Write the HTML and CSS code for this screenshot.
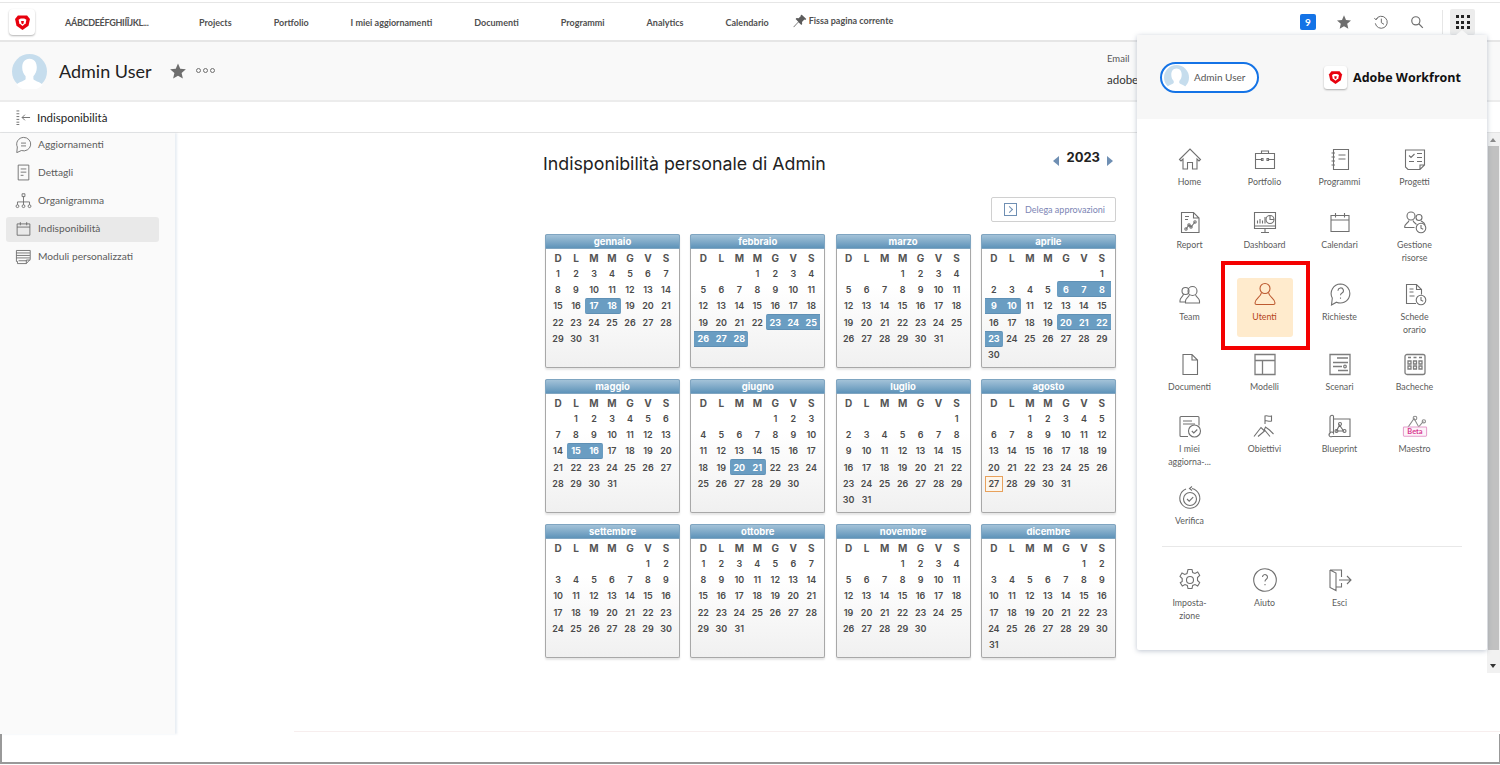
FILE: index.html
```html
<!DOCTYPE html>
<html lang="en">

<head>
  <meta charset="UTF-8" />
  <title>Indisponibilità - Admin User</title>
  <link rel="stylesheet" href="styles.css">
</head>

<body>

  <svg class="defs" width="0" height="0">
    <symbol id="shield" viewBox="0 0 24 24">
      <path fill="#e8000d" d="M5.500 2h13l4 5-2 9.500-8.500 6-8.500-6-2-9.500z" />
      <path fill="#fff" d="M6.500 8l3-1.500h5l3 1.500-1 5-4.500 4-4.500-4z" />
      <path fill="#e8000d" d="M10 10h4l-.5 3.500-1.500 1-1.500-1z" />
    </symbol>
    <symbol id="avatar" viewBox="0 0 36 36">
      <circle cx="18" cy="18" r="18" fill="#c6dded" />
      <path fill="#fff" d="M18 5c5 0 7.500 4 7.500 9 0 4-1.500 7-3.500 9v3c2 2 7 3 9.500 5.500a18 18 0 0 1-27 0C7 29 12 28 14 26v-3c-2-2-3.500-5-3.500-9 0-5 2.500-9 7.500-9z" />
    </symbol>
    <symbol id="star" viewBox="0 0 24 24">
      <path fill="#6e6e6e" d="M12 2l3 7 7.500.7-5.700 5 1.700 7.300L12 18.200 5.500 22l1.700-7.300-5.700-5L9 9z" />
    </symbol>
    <symbol id="cal" viewBox="0 0 24 24">
      <path d="M3 5.500h18v16H3zM3 10h18M7.500 3v4.500M16.500 3v4.500" />
    </symbol>
  </svg>

  <header class="topbar">
    <div class="logo-box"><svg class="logo-mark"><use href="#shield" /></svg></div>
    <nav class="topnav">
      <a class="first">AÁBCDEÉFGHIÍÎJKL...</a>
      <a>Projects</a>
      <a>Portfolio</a>
      <a>I miei aggiornamenti</a>
      <a>Documenti</a>
      <a>Programmi</a>
      <a>Analytics</a>
      <a>Calendario</a>
    </nav>
    <div class="pin">
      <svg class="ico-pin" viewBox="0 0 16 16">
        <path fill="#5c5c5c" d="M10 .8l5.200 5-1.200 1-1-.4-2.700 2.700.2 2.400-1 1L6.300 9.300 1 15l-.5-.5L6 8.800 3 5.700l1-1 2.400.2L9 2.200l-.3-1z" />
      </svg>
      Fissa pagina corrente
    </div>
    <div class="top-tools">
      <span class="badge">9</span>
      <svg class="tool"><use href="#star" /></svg>
      <svg class="tool line" viewBox="0 0 24 24">
        <path d="M4.500 8A9 9 0 1 1 3.500 14M2 6.500l2.500 2 2.500-2M12.500 7v6l4 2.500" />
      </svg>
      <svg class="tool line search" viewBox="0 0 24 24">
        <circle cx="10" cy="10" r="7" />
        <path d="M15 15l7 7" />
      </svg>
      <span class="tool-sep"></span>
      <div class="apps">
        <b></b><b></b><b></b><b></b><b></b><b></b><b></b><b></b><b></b>
      </div>
    </div>
  </header>

  <section class="userhead">
    <svg class="avatar-big"><use href="#avatar" /></svg>
    <h1>Admin User</h1>
    <svg class="head-star"><use href="#star" /></svg>
    <div class="dots"><i></i><i></i><i></i></div>
    <div class="email">
      <span class="email-label">Email</span>
      <span class="email-value">adobel</span>
    </div>
  </section>

  <div class="subhead">
    <svg class="collapse" viewBox="0 0 16 16">
      <path d="M.5 1h3M.5 4h3M.5 7h3M.5 10h3M.5 13h3M.5 15.500h3" />
      <path d="M15 8H6.500M9.500 5l-3 3 3 3" />
    </svg>
    Indisponibilità
  </div>

  <div class="content">
    <aside class="sidebar">
      <a class="side-item">
        <svg class="side-ico" viewBox="0 0 24 24">
          <path d="M12 2a10 9.500 0 1 1-3 18.500l-6.500 3 .8-8A10 9.500 0 0 1 12 2zM8.500 10h7M8.500 14h7" />
        </svg>
        Aggiornamenti
      </a>
      <a class="side-item">
        <svg class="side-ico" viewBox="0 0 24 24">
          <path d="M4.500 1.500h15v21h-15zM8 7h8M8 11.500h8M8 16h4" />
        </svg>
        Dettagli
      </a>
      <a class="side-item">
        <svg class="side-ico" viewBox="0 0 24 24">
          <path d="M10 2.500h4v4h-4zM12 6.500V14M3.500 18v-4h17v4M12 14v4" />
          <circle cx="3.500" cy="20" r="2" /><circle cx="12" cy="20" r="2" /><circle cx="20.500" cy="20" r="2" />
        </svg>
        Organigramma
      </a>
      <a class="side-item active">
        <svg class="side-ico"><use href="#cal" /></svg>
        Indisponibilità
      </a>
      <a class="side-item">
        <svg class="side-ico" viewBox="0 0 24 24">
          <path d="M2 3.500h19.500V16l-5.500 6H3.500v-3H2zM2 7h19M2 10.500h19M2 14h19M5 18h11M16 22v-5h5.500" />
        </svg>
        Moduli personalizzati
      </a>
    </aside>

    <main class="main">
      <div class="title-row">
        <h2>Indisponibilità personale di Admin</h2>
        <div class="year">
          <i class="arrow-left"></i>
          <span>2023</span>
          <i class="arrow-right"></i>
        </div>
      </div>

      <div class="delegate-row">
        <a class="delegate">
          <span class="delegate-ico"></span>
          Delega approvazioni
        </a>
      </div>

      <div class="months">
        <div class="month">
          <div class="month-name">gennaio</div>
          <div class="days">
            <b>D</b><b>L</b><b>M</b><b>M</b><b>G</b><b>V</b><b>S</b>
            <span>1</span><span>2</span><span>3</span><span>4</span><span>5</span><span>6</span><span>7</span><span>8</span><span>9</span><span>10</span><span>11</span><span>12</span><span>13</span><span>14</span><span>15</span><span>16</span><span class="off start">17</span><span class="off end">18</span><span>19</span><span>20</span><span>21</span><span>22</span><span>23</span><span>24</span><span>25</span><span>26</span><span>27</span><span>28</span><span>29</span><span>30</span><span>31</span>
          </div>
        </div>
        <div class="month">
          <div class="month-name">febbraio</div>
          <div class="days">
            <b>D</b><b>L</b><b>M</b><b>M</b><b>G</b><b>V</b><b>S</b>
            <span class="col4">1</span><span>2</span><span>3</span><span>4</span><span>5</span><span>6</span><span>7</span><span>8</span><span>9</span><span>10</span><span>11</span><span>12</span><span>13</span><span>14</span><span>15</span><span>16</span><span>17</span><span>18</span><span>19</span><span>20</span><span>21</span><span>22</span><span class="off start">23</span><span class="off">24</span><span class="off">25</span><span class="off">26</span><span class="off">27</span><span class="off end">28</span>
          </div>
        </div>
        <div class="month">
          <div class="month-name">marzo</div>
          <div class="days">
            <b>D</b><b>L</b><b>M</b><b>M</b><b>G</b><b>V</b><b>S</b>
            <span class="col4">1</span><span>2</span><span>3</span><span>4</span><span>5</span><span>6</span><span>7</span><span>8</span><span>9</span><span>10</span><span>11</span><span>12</span><span>13</span><span>14</span><span>15</span><span>16</span><span>17</span><span>18</span><span>19</span><span>20</span><span>21</span><span>22</span><span>23</span><span>24</span><span>25</span><span>26</span><span>27</span><span>28</span><span>29</span><span>30</span><span>31</span>
          </div>
        </div>
        <div class="month">
          <div class="month-name">aprile</div>
          <div class="days">
            <b>D</b><b>L</b><b>M</b><b>M</b><b>G</b><b>V</b><b>S</b>
            <span class="col7">1</span><span>2</span><span>3</span><span>4</span><span>5</span><span class="off start">6</span><span class="off">7</span><span class="off">8</span><span class="off">9</span><span class="off end">10</span><span>11</span><span>12</span><span>13</span><span>14</span><span>15</span><span>16</span><span>17</span><span>18</span><span>19</span><span class="off start">20</span><span class="off">21</span><span class="off">22</span><span class="off end">23</span><span>24</span><span>25</span><span>26</span><span>27</span><span>28</span><span>29</span><span>30</span>
          </div>
        </div>
        <div class="month">
          <div class="month-name">maggio</div>
          <div class="days">
            <b>D</b><b>L</b><b>M</b><b>M</b><b>G</b><b>V</b><b>S</b>
            <span class="col2">1</span><span>2</span><span>3</span><span>4</span><span>5</span><span>6</span><span>7</span><span>8</span><span>9</span><span>10</span><span>11</span><span>12</span><span>13</span><span>14</span><span class="off start">15</span><span class="off end">16</span><span>17</span><span>18</span><span>19</span><span>20</span><span>21</span><span>22</span><span>23</span><span>24</span><span>25</span><span>26</span><span>27</span><span>28</span><span>29</span><span>30</span><span>31</span>
          </div>
        </div>
        <div class="month">
          <div class="month-name">giugno</div>
          <div class="days">
            <b>D</b><b>L</b><b>M</b><b>M</b><b>G</b><b>V</b><b>S</b>
            <span class="col5">1</span><span>2</span><span>3</span><span>4</span><span>5</span><span>6</span><span>7</span><span>8</span><span>9</span><span>10</span><span>11</span><span>12</span><span>13</span><span>14</span><span>15</span><span>16</span><span>17</span><span>18</span><span>19</span><span class="off start">20</span><span class="off end">21</span><span>22</span><span>23</span><span>24</span><span>25</span><span>26</span><span>27</span><span>28</span><span>29</span><span>30</span>
          </div>
        </div>
        <div class="month">
          <div class="month-name">luglio</div>
          <div class="days">
            <b>D</b><b>L</b><b>M</b><b>M</b><b>G</b><b>V</b><b>S</b>
            <span class="col7">1</span><span>2</span><span>3</span><span>4</span><span>5</span><span>6</span><span>7</span><span>8</span><span>9</span><span>10</span><span>11</span><span>12</span><span>13</span><span>14</span><span>15</span><span>16</span><span>17</span><span>18</span><span>19</span><span>20</span><span>21</span><span>22</span><span>23</span><span>24</span><span>25</span><span>26</span><span>27</span><span>28</span><span>29</span><span>30</span><span>31</span>
          </div>
        </div>
        <div class="month">
          <div class="month-name">agosto</div>
          <div class="days">
            <b>D</b><b>L</b><b>M</b><b>M</b><b>G</b><b>V</b><b>S</b>
            <span class="col3">1</span><span>2</span><span>3</span><span>4</span><span>5</span><span>6</span><span>7</span><span>8</span><span>9</span><span>10</span><span>11</span><span>12</span><span>13</span><span>14</span><span>15</span><span>16</span><span>17</span><span>18</span><span>19</span><span>20</span><span>21</span><span>22</span><span>23</span><span>24</span><span>25</span><span>26</span><span class="today">27</span><span>28</span><span>29</span><span>30</span><span>31</span>
          </div>
        </div>
        <div class="month">
          <div class="month-name">settembre</div>
          <div class="days">
            <b>D</b><b>L</b><b>M</b><b>M</b><b>G</b><b>V</b><b>S</b>
            <span class="col6">1</span><span>2</span><span>3</span><span>4</span><span>5</span><span>6</span><span>7</span><span>8</span><span>9</span><span>10</span><span>11</span><span>12</span><span>13</span><span>14</span><span>15</span><span>16</span><span>17</span><span>18</span><span>19</span><span>20</span><span>21</span><span>22</span><span>23</span><span>24</span><span>25</span><span>26</span><span>27</span><span>28</span><span>29</span><span>30</span>
          </div>
        </div>
        <div class="month">
          <div class="month-name">ottobre</div>
          <div class="days">
            <b>D</b><b>L</b><b>M</b><b>M</b><b>G</b><b>V</b><b>S</b>
            <span>1</span><span>2</span><span>3</span><span>4</span><span>5</span><span>6</span><span>7</span><span>8</span><span>9</span><span>10</span><span>11</span><span>12</span><span>13</span><span>14</span><span>15</span><span>16</span><span>17</span><span>18</span><span>19</span><span>20</span><span>21</span><span>22</span><span>23</span><span>24</span><span>25</span><span>26</span><span>27</span><span>28</span><span>29</span><span>30</span><span>31</span>
          </div>
        </div>
        <div class="month">
          <div class="month-name">novembre</div>
          <div class="days">
            <b>D</b><b>L</b><b>M</b><b>M</b><b>G</b><b>V</b><b>S</b>
            <span class="col4">1</span><span>2</span><span>3</span><span>4</span><span>5</span><span>6</span><span>7</span><span>8</span><span>9</span><span>10</span><span>11</span><span>12</span><span>13</span><span>14</span><span>15</span><span>16</span><span>17</span><span>18</span><span>19</span><span>20</span><span>21</span><span>22</span><span>23</span><span>24</span><span>25</span><span>26</span><span>27</span><span>28</span><span>29</span><span>30</span>
          </div>
        </div>
        <div class="month">
          <div class="month-name">dicembre</div>
          <div class="days">
            <b>D</b><b>L</b><b>M</b><b>M</b><b>G</b><b>V</b><b>S</b>
            <span class="col6">1</span><span>2</span><span>3</span><span>4</span><span>5</span><span>6</span><span>7</span><span>8</span><span>9</span><span>10</span><span>11</span><span>12</span><span>13</span><span>14</span><span>15</span><span>16</span><span>17</span><span>18</span><span>19</span><span>20</span><span>21</span><span>22</span><span>23</span><span>24</span><span>25</span><span>26</span><span>27</span><span>28</span><span>29</span><span>30</span><span>31</span>
          </div>
        </div>
      </div>
    </main>

    <div class="scrollbar">
      <i class="scroll-up"></i>
      <div class="thumb"></div>
      <i class="scroll-down"></i>
    </div>
  </div>

  <div class="bottom-box"></div>

  <!-- apps menu -->
  <div class="panel">
    <i class="panel-tip"></i>
    <div class="panel-head">
      <div class="pill">
        <svg class="pill-avatar"><use href="#avatar" /></svg>
        Admin User
      </div>
      <div class="brand">
        <div class="brand-box"><svg class="brand-mark"><use href="#shield" /></svg></div>
        Adobe Workfront
      </div>
    </div>

    <div class="apps-grid">
      <a class="app">
        <svg viewBox="0 0 24 24"><path d="M1.500 12.500L12 2l10.500 10.500-1.500 1.500-2-2v10h-4.500v-6.500h-5V22H5V12l-2 2z" /></svg>
        <span>Home</span>
      </a>
      <a class="app">
        <svg viewBox="0 0 24 24"><path d="M2.500 6.500h19v15h-19zM8.500 6.500V4h7v2.500M2.500 12.500h6M15.500 12.500h6M8.500 11.500h1.500v2H8.500zM14 11.500h1.500v2H14z" /></svg>
        <span>Portfolio</span>
      </a>
      <a class="app">
        <svg viewBox="0 0 24 24"><path d="M5.500 2.500h15v20h-15zM3.500 6h3.500M3.500 10h3.500M3.500 14h3.500M3.500 18h3.500M10.500 8h7M10.500 12h7" /></svg>
        <span>Programmi</span>
      </a>
      <a class="app">
        <svg viewBox="0 0 24 24"><path d="M2.500 3h19v15l-4.500 4.500H5L2.500 20zM17 22.500V18h4.500M6 8.500l2 2 3.500-3.500M14 6.500h5M14 10.500h5M14 14.500h5M6 14.500h5" /></svg>
        <span>Progetti</span>
      </a>

      <a class="app">
        <svg viewBox="0 0 24 24"><path d="M3.500 2.500h12l5.500 5.500v14.500H3.500zM15.500 2.500V8H21M7 6.500h4M7 9.500h3M8 19l3-4 2 2 4-5" /><circle cx="8" cy="19" r="1.200" /><circle cx="11" cy="15" r="1.200" /><circle cx="13" cy="17" r="1.200" /><circle cx="17" cy="12" r="1.200" /></svg>
        <span>Report</span>
      </a>
      <a class="app">
        <svg viewBox="0 0 24 24"><path d="M1.500 2.500h21v16h-21zM1.500 16h21M12 18.500v3.500M8 22.500h8M4.500 13.500v-3M7 13.500V9M9.500 13.500v-3M12 13.500V7" /><circle cx="17" cy="9.500" r="4" /><path d="M17 5.500v4h4" /></svg>
        <span>Dashboard</span>
      </a>
      <a class="app">
        <svg><use href="#cal" /></svg>
        <span>Calendari</span>
      </a>
      <a class="app">
        <svg viewBox="0 0 24 24"><circle cx="8" cy="6" r="4" /><circle cx="16" cy="7.500" r="3" /><path d="M1.500 17.500c0-4 3.500-4 4.500-7M10 10.500c1 2.500 3 3 3.500 4M1.500 17.500h10M18 11c1.500 1 3.500 1.500 4 4" /><circle cx="18" cy="18" r="4.800" /><path d="M18 15v3.200l2.200 1" /></svg>
        <span>Gestione risorse</span>
      </a>

      <a class="app">
        <svg viewBox="0 0 24 24"><circle cx="7.500" cy="9" r="3.500" /><circle cx="14.500" cy="9" r="4.500" /><path d="M11.500 12.500C11 15.500 7.500 16 7.500 19v2h14v-2c0-3-3.500-3.500-4-6.500M5.500 12C5 15 2 15.500 2 18.500V20h5.500" /></svg>
        <span>Team</span>
      </a>
      <a class="app selected">
        <svg viewBox="0 0 24 24"><circle cx="12" cy="6.500" r="5" /><path d="M8.500 10.500C8 15 2 16.500 2 21c0 1 .5 1.500 1.500 1.500h17c1 0 1.500-.5 1.500-1.500 0-4.500-6-6-6.500-10.500" /></svg>
        <span>Utenti</span>
      </a>
      <a class="app">
        <svg viewBox="0 0 24 24"><path d="M12.500 2a9.500 9.500 0 1 1-4 18.200L3.500 23l.8-7A9.500 9.500 0 0 1 12.500 2zM10 8.700a2.700 2.700 0 1 1 4 2.300c-1 .6-1.500 1.200-1.500 2.300M12.500 15.500v1.200" /></svg>
        <span>Richieste</span>
      </a>
      <a class="app">
        <svg viewBox="0 0 24 24"><path d="M13 21.500H3.500v-19h10l5 5v5M13.500 2.500v5h5M6.500 7h4M6.500 10h4M6.500 14h5" /><circle cx="18" cy="18" r="4.800" /><path d="M18 15v3.200l2.200 1" /></svg>
        <span>Schede orario</span>
      </a>

      <a class="app">
        <svg viewBox="0 0 24 24"><path d="M5 2.500h9l5.500 5.500v14.500H5zM14 2.500V8h5.500" /></svg>
        <span>Documenti</span>
      </a>
      <a class="app heavy">
        <svg viewBox="0 0 24 24"><path d="M2 2.500h20v20H2zM2 8.500h20M9.500 8.500v14" /></svg>
        <span>Modelli</span>
      </a>
      <a class="app heavy">
        <svg viewBox="0 0 24 24"><path d="M2 2.500h20v20H2zM9 6h11M5 10.500h15M5 14.500h9M10 18.500h10" /><circle cx="17" cy="14.500" r="1.300" /></svg>
        <span>Scenari</span>
      </a>
      <a class="app heavy">
        <svg viewBox="0 0 24 24"><rect x="2" y="2.500" width="20" height="20" rx="2" /><path d="M5 5.500h3M10.500 5.500h3M16 5.500h3M5 9h3v3H5zM5 14h3v3H5zM10.500 9h3v3h-3zM10.500 14h3v3h-3zM16 9h3v3h-3zM16 14h3v3h-3z" /></svg>
        <span>Bacheche</span>
      </a>

      <a class="app">
        <svg viewBox="0 0 24 24"><path d="M10 22.500H3a1 1 0 0 1-1-1V3.500a1 1 0 0 1 1-1h17a1 1 0 0 1 1 1v8M5 7h9M5 10h12" /><circle cx="16.500" cy="17" r="6" /><path d="M13.800 17l2 2 3.500-3.500" /></svg>
        <span>I miei aggiorna-...</span>
      </a>
      <a class="app">
        <svg viewBox="0 0 24 24"><path d="M12 10V1.500M12 2c2-1 3.500 1 6.500 0v5c-3 1-4.500-1-6.500 0M1 22.500l7-9 3 3 1.500-3.500 4 3 4 4M5 22.500l7-6 5 6" /></svg>
        <span>Obiettivi</span>
      </a>
      <a class="app">
        <svg viewBox="0 0 24 24"><path d="M2 19V3.500a2 2 0 0 1 3.500-1.500V19a2 2 0 0 0-3.500 0zM5.500 5H22v17.500H4a2 2 0 0 1-2-3.500M11.500 11l-3 6h7z" /><circle cx="12" cy="10" r="1.500" /><circle cx="8.500" cy="17" r="1.500" /><circle cx="16.500" cy="17" r="1.500" /></svg>
        <span>Blueprint</span>
      </a>
      <a class="app">
        <svg class="maestro" viewBox="0 0 28 24">
          <path d="M6 14l7-10 5 9 5-6" /><circle cx="14" cy="3.500" r="2" /><circle cx="23.500" cy="7" r="1.800" />
          <rect class="beta-box" x="1.500" y="13" width="25" height="10" rx="1" />
          <text class="beta-text" x="14" y="21">Beta</text>
        </svg>
        <span>Maestro</span>
      </a>

      <a class="app">
        <svg viewBox="0 0 24 24"><path d="M14 2.500A10 10 0 1 1 8 3M14 .5l-2.500 2 2.500 2" /><circle cx="12" cy="13" r="6.500" /><path d="M9 13l2.200 2.200 4-4" /></svg>
        <span>Verifica</span>
      </a>
    </div>

    <div class="panel-line"></div>

    <div class="apps-grid footer-grid">
      <a class="app">
        <svg viewBox="0 0 24 24"><path d="M10 1.500h4l.7 3 2.300 1 2.700-1.500 2 3.300-2.200 2.200v3l2.200 2.200-2 3.300-2.700-1.500-2.300 1-.7 3h-4l-.7-3-2.300-1-2.700 1.500-2-3.300L4.200 13.500v-3L2 8.300l2-3.300L6.700 6.500 9 5.500z" /><circle cx="12" cy="12" r="3.500" /></svg>
        <span>Imposta-zione</span>
      </a>
      <a class="app">
        <svg viewBox="0 0 24 24"><circle cx="12" cy="12" r="11.300" /><path d="M9.500 9a2.500 2.500 0 1 1 3.800 2.200c-.9.600-1.300 1.200-1.300 2.300M12 16v1.300" /></svg>
        <span>Aiuto</span>
      </a>
      <a class="app">
        <svg viewBox="0 0 24 24"><path d="M2 2h11.500v7M13.500 15v4H8M2 2v17.500L8 22.500V5L2 2M11 12h12M19 8l4 4-4 4" /></svg>
        <span>Esci</span>
      </a>
    </div>

    <div class="red-frame"></div>
  </div>

</body>

</html>
```

FILE: styles.css
```css
* {
  box-sizing: border-box;
}

html,
body {
  margin: 0;
  height: 765px;
  overflow: hidden;
}

body {
  position: relative;
  display: flex;
  flex-direction: column;
  font-family: "Lato", sans-serif;
  color: #4b4b4b;
  background: #fff;
}

svg {
  display: block;
}

.defs {
  position: absolute;
}

/* top bar */
.topbar {
  display: flex;
  align-items: center;
  height: 40px;
  flex-shrink: 0;
  margin-top: 2px;
  padding: 1px 0 0 9px;
  border-top: 1px solid #e6e6e6;
  border-bottom: 2px solid #e6e6e6;
}

.logo-box {
  display: flex;
  align-items: center;
  justify-content: center;
  width: 26px;
  height: 26px;
  background: #fff;
  border-radius: 4px;
  box-shadow: 0 1px 2px rgba(0, 0, 0, .3);
}

.logo-mark {
  width: 17px;
  height: 17px;
}

.topnav {
  display: flex;
  align-items: center;
  gap: 42px;
  margin-left: 30px;
  font-size: 9px;
  font-weight: 700;
  color: #505050;
}

.topnav .first {
  width: 92px;
  letter-spacing: -.3px;
}

.pin {
  display: flex;
  align-items: center;
  gap: 2px;
  margin: -3px 0 0 24px;
  font-size: 9px;
  font-weight: 700;
  color: #505050;
}

.ico-pin {
  width: 14px;
  height: 14px;
}

.top-tools {
  display: flex;
  align-items: center;
  margin-left: auto;
  padding-right: 25px;
}

.badge {
  display: flex;
  align-items: center;
  justify-content: center;
  width: 16px;
  height: 16px;
  margin-right: 20px;
  background: #1473e6;
  border-radius: 2px;
  color: #fff;
  font-size: 10px;
  font-weight: 700;
}

.tool {
  width: 16px;
  height: 16px;
  margin-right: 21px;
}

.tool.line {
  fill: none;
  stroke: #6e6e6e;
  stroke-width: 1.500;
}

.tool.search {
  width: 14px;
  height: 14px;
  margin-right: 18px;
  stroke-width: 2;
}

.tool-sep {
  width: 1px;
  height: 24px;
  margin-right: 7px;
  background: #e6e6e6;
}

.apps {
  display: grid;
  grid-template-columns: repeat(3, 3px);
  gap: 2.500px;
  align-content: center;
  justify-content: center;
  width: 25px;
  height: 26px;
  background: #ececec;
  border-radius: 2px;
}

.apps b {
  height: 3px;
  background: #222;
}

/* user header */
.userhead {
  position: relative;
  display: flex;
  align-items: center;
  height: 60px;
  flex-shrink: 0;
  padding: 0 0 0 12px;
  background: #f9f9f9;
  border-bottom: 2px solid #ececec;
}

.avatar-big {
  width: 35px;
  height: 35px;
}

.userhead h1 {
  margin: 0 0 0 12px;
  font-size: 18px;
  font-weight: 400;
  color: #222;
}

.head-star {
  width: 18px;
  height: 18px;
  margin-left: 17px;
}

.dots {
  display: flex;
  gap: 2px;
  margin: -2px 0 0 9px;
}

.dots i {
  width: 5px;
  height: 5px;
  border: 1px solid #707070;
  border-radius: 50%;
}

.email {
  display: flex;
  flex-direction: column;
  gap: 9px;
  margin: -3px 0 0 auto;
  width: 393px;
}

.email-label {
  font-size: 9.500px;
  color: #555;
}

.email-value {
  font-size: 11.500px;
  color: #333;
}

/* sub header */
.subhead {
  display: flex;
  align-items: center;
  gap: 6px;
  height: 31px;
  flex-shrink: 0;
  padding-left: 16px;
  border-bottom: 1px solid #e4e4e4;
  font-size: 11.500px;
  color: #222;
}

.collapse {
  width: 15px;
  height: 15px;
  fill: none;
  stroke: #6e6e6e;
  stroke-width: 1;
}

/* content */
.content {
  position: relative;
  display: flex;
  height: 601px;
  flex-shrink: 0;
}

.content::after {
  content: "";
  position: absolute;
  left: 294px;
  right: 0;
  bottom: 2px;
  height: 1px;
  background: #f7eeee;
}

.sidebar {
  display: flex;
  flex-direction: column;
  gap: 3px;
  width: 175px;
  flex-shrink: 0;
  padding-left: 6px;
  background: #fafafa;
  box-shadow: 2px 0 2px rgba(180, 195, 215, .3);
}

.side-item {
  display: flex;
  align-items: center;
  gap: 6px;
  width: 153px;
  height: 25px;
  padding: 0 0 3px 9px;
  font-size: 10.200px;
  color: #5c5c5c;
  border-radius: 3px;
}

.side-item.active {
  background: #e9e9e9;
}

.side-ico {
  width: 17px;
  height: 17px;
  fill: none;
  stroke: #666;
  stroke-width: 1.200;
}

.main {
  flex: 1;
  padding: 20px 0 0 368px;
}

.title-row {
  display: flex;
  align-items: center;
  justify-content: space-between;
  width: 573px;
  height: 20px;
}

.title-row h2 {
  margin: 0;
  font-family: "Inter", sans-serif;
  font-size: 17.800px;
  font-weight: 400;
  color: #222;
}

.year {
  display: flex;
  align-items: center;
  gap: 7px;
  margin: -4px 3px 0 0;
  font-family: "Inter", sans-serif;
  font-size: 13px;
  font-weight: 700;
  color: #222;
}

.year span {
  margin-bottom: 8px;
}

.arrow-left,
.arrow-right {
  width: 0;
  height: 0;
  border-top: 5.500px solid transparent;
  border-bottom: 5.500px solid transparent;
}

.arrow-left {
  border-right: 6px solid #6f8fb3;
}

.arrow-right {
  border-left: 6px solid #6f8fb3;
}

.delegate-row {
  display: flex;
  justify-content: flex-end;
  width: 573px;
  margin-top: 24px;
}

.delegate {
  display: flex;
  align-items: center;
  gap: 8px;
  width: 125px;
  height: 25px;
  padding-left: 12px;
  background: #fff;
  border: 1px solid #d0d0d0;
  border-radius: 2px;
  font-size: 9px;
  color: #7d86b5;
}

.delegate-ico {
  position: relative;
  width: 13px;
  height: 13px;
  border: 1px solid #6f8fb3;
}

.delegate-ico::after {
  content: "";
  position: absolute;
  left: 2px;
  top: 3px;
  width: 4px;
  height: 4px;
  border-top: 1px solid #6f8fb3;
  border-right: 1px solid #6f8fb3;
  transform: rotate(45deg);
}

/* calendar */
.months {
  display: grid;
  grid-template-columns: repeat(4, 135px);
  grid-auto-rows: 134px;
  gap: 11px 10.300px;
  margin: 12px 0 0 2px;
  width: 571px;
}

.month {
  background: linear-gradient(#fff 40%, #f0f0f0);
  border: 1px solid #a8a8a8;
  border-top: none;
  border-radius: 2px;
  box-shadow: 0 2px 2px rgba(0, 0, 0, .1);
}

.month-name {
  height: 15px;
  margin: 0 -1px;
  background: linear-gradient(#a3c2d8, #5e93b9);
  border: 1px solid #7fa5c1;
  border-radius: 2px 2px 0 0;
  color: #fff;
  font-family: "Inter", sans-serif;
  font-size: 9.500px;
  font-weight: 700;
  line-height: 13px;
  text-align: center;
}

.days {
  display: grid;
  grid-template-columns: repeat(7, 18px);
  grid-template-rows: 15px;
  grid-auto-rows: 16.400px;
  padding: 1px 0 0 3px;
  font-family: "Inter", sans-serif;
  font-size: 9px;
  font-weight: 600;
  color: #4b4b4b;
}

.days b {
  display: flex;
  align-items: center;
  justify-content: center;
  font-size: 10px;
  font-weight: 700;
  color: #555;
}

.days span {
  display: flex;
  align-items: center;
  justify-content: center;
  height: 16px;
}

.col2 { grid-column-start: 2; }
.col3 { grid-column-start: 3; }
.col4 { grid-column-start: 4; }
.col5 { grid-column-start: 5; }
.col6 { grid-column-start: 6; }
.col7 { grid-column-start: 7; }

.days .off {
  background: #6a9dc2;
  border-top: 1px solid #5f90b5;
  border-bottom: 1px solid #5f90b5;
  color: #fff;
  font-weight: 700;
}

.days .start {
  border-radius: 2px 0 0 2px;
}

.days .end {
  border-radius: 0 2px 2px 0;
}

.days .today {
  border: 1px solid #e8a15c;
  background: #fdf6ec;
}

/* scrollbar */
.scrollbar {
  position: relative;
  width: 13px;
  height: 540px;
  flex-shrink: 0;
  padding-top: 13px;
  background: #f1f1f1;
}

.thumb {
  width: 11px;
  height: 504px;
  margin-left: 1px;
  background: #c1c1c1;
}

.scroll-up,
.scroll-down {
  position: absolute;
  left: 3px;
  width: 0;
  height: 0;
  border-left: 3.500px solid transparent;
  border-right: 3.500px solid transparent;
}

.scroll-up {
  top: 5px;
  border-bottom: 4px solid #8a8a8a;
}

.scroll-down {
  bottom: 5px;
  border-top: 4px solid #333;
}

.bottom-box {
  flex: 1;
  margin-bottom: 1px;
  border: solid #999;
  border-width: 0 1px 2px 2px;
}

/* apps menu */
.panel {
  position: absolute;
  left: 1137px;
  top: 35px;
  width: 350px;
  height: 615px;
  background: #fff;
  border-radius: 2px;
  box-shadow: 0 1px 5px rgba(70, 90, 120, .35);
}

.panel-tip {
  position: absolute;
  left: 319px;
  top: -5px;
  width: 0;
  height: 0;
  border-left: 6px solid transparent;
  border-right: 6px solid transparent;
  border-bottom: 5px solid #f7f7f7;
}

.panel-head {
  display: flex;
  align-items: center;
  justify-content: space-between;
  height: 84px;
  padding: 0 26px 0 23px;
  background: #f7f7f7;
}

.pill {
  display: flex;
  align-items: center;
  gap: 5px;
  width: 99px;
  height: 31px;
  padding-left: 2px;
  background: #fff;
  border: 2px solid #1473e6;
  border-radius: 16px;
  font-size: 10px;
  color: #555;
}

.pill-avatar {
  width: 25px;
  height: 25px;
}

.brand {
  display: flex;
  align-items: center;
  gap: 6px;
  font-family: "Open Sans", sans-serif;
  font-size: 12.500px;
  font-weight: 700;
  color: #111;
}

.brand-box {
  display: flex;
  align-items: center;
  justify-content: center;
  width: 23px;
  height: 23px;
  background: #fff;
  border-radius: 3px;
  box-shadow: 0 1px 2px rgba(0, 0, 0, .3);
}

.brand-mark {
  width: 15px;
  height: 15px;
}

.apps-grid {
  display: grid;
  grid-template-columns: repeat(4, 75px);
  grid-template-rows: 63px 72px 70px 62px 72px 60px;
  padding: 28px 0 0 15px;
}

.app {
  display: flex;
  flex-direction: column;
  align-items: center;
  font-size: 8.800px;
  line-height: 13px;
  color: #5c5c5c;
  text-align: center;
}

.app svg {
  width: 24px;
  height: 24px;
  fill: none;
  stroke: #707070;
  stroke-width: 1.100;
}

.app.heavy svg {
  stroke: #7d7d7d;
  stroke-width: 1.300;
}

.app span {
  width: 48px;
  margin-top: 4px;
}

.app.selected {
  justify-self: center;
  width: 56px;
  height: 59px;
  margin-top: -4px;
  padding-top: 4px;
  background: #ffebcd;
  border-radius: 3px;
  color: #b5441a;
}

.app.selected svg {
  stroke: #bd5a30;
}

.app .maestro {
  width: 26px;
  stroke: #8a8a8a;
}

.beta-box {
  fill: #fdf2f9;
  stroke: #e59ccb;
}

.beta-text {
  fill: #d8368f;
  stroke: none;
  font-size: 8px;
  font-weight: 700;
  text-anchor: middle;
}

.panel-line {
  height: 1px;
  margin: 0 25px;
  background: #e8e8e8;
}

.footer-grid {
  grid-template-rows: 60px;
  padding-top: 21px;
}

.red-frame {
  position: absolute;
  left: 84px;
  top: 226px;
  width: 89px;
  height: 89px;
  border: 4.500px solid #f40000;
  pointer-events: none;
}
```
